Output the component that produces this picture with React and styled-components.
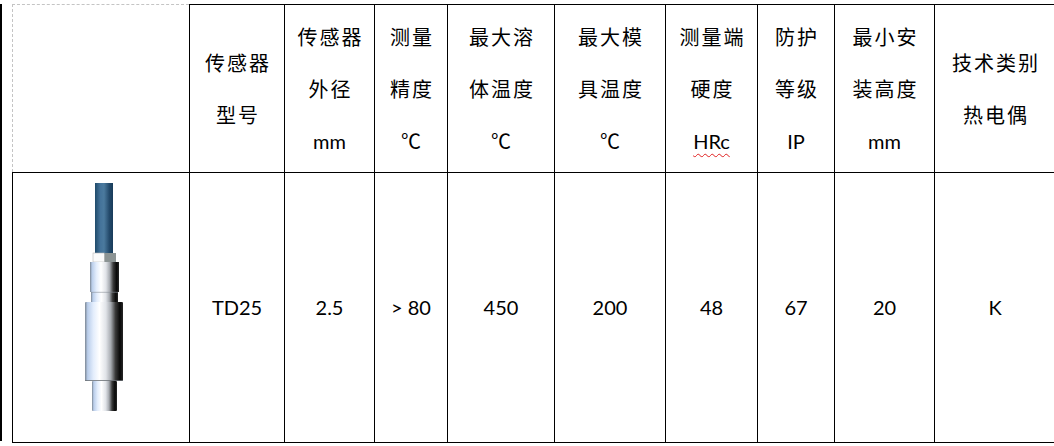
import React from 'react';
import styled, { createGlobalStyle } from 'styled-components';

const GlobalStyle = createGlobalStyle`
  html, body {
    margin: 0;
    padding: 0;
    background: #fff;
    overflow: hidden;
  }
  body {
    font-family: 'Noto Sans CJK SC', sans-serif;
    font-weight: 400;
    color: #000;
  }
`;

const Page = styled.div`
  display: flex;
  align-items: flex-start;
  gap: 10px;
  padding-top: 4px;
  width: 1100px;
`;

const EdgeRule = styled.div`
  width: 2px;
  height: 437px;
  background: #000;
  flex: none;
`;

const Table = styled.table`
  border-collapse: collapse;
  table-layout: fixed;
  width: 1043px;
  flex: none;
`;

const HeadRow = styled.tr`
  height: 168px;
`;

const DataRow = styled.tr`
  height: 270px;
`;

const Cell = styled.td`
  padding: 0;
  border: 1px solid #000;
  text-align: center;
  vertical-align: middle;
`;

const BlankCell = styled(Cell)`
  border-top: 1px dashed #c4c4c4;
  border-left: 1px dashed #c4c4c4;
`;

const ImageCell = styled(Cell)`
  padding: 0 0 16px 5px;
`;

const Line = styled.span`
  display: block;
  height: 52px;
  line-height: 52px;
  white-space: nowrap;
  font-family: ${(p) =>
    p.latin ? "Lato, 'Liberation Sans', sans-serif" : "'Noto Sans CJK SC', sans-serif"};
  font-size: 20px;
  font-weight: 400;
  letter-spacing: ${(p) => (p.latin ? '0' : '2px')};
  text-indent: ${(p) => (p.latin ? '0' : '2px')};
  text-decoration: ${(p) => (p.typo ? 'underline wavy #e02020' : 'none')};
  text-decoration-thickness: 1px;
  text-underline-offset: 4px;
`;

const Value = styled.span`
  font-family: Lato, 'Liberation Sans', sans-serif;
  font-size: 20px;
  font-weight: 400;
`;

const columns = [177, 95, 90, 73, 107, 111, 92, 77, 100, 121];

const headers = [
  [{ t: '传感器' }, { t: '型号' }],
  [{ t: '传感器' }, { t: '外径' }, { t: 'mm', latin: true }],
  [{ t: '测量' }, { t: '精度' }, { t: '℃' }],
  [{ t: '最大溶' }, { t: '体温度' }, { t: '℃' }],
  [{ t: '最大模' }, { t: '具温度' }, { t: '℃' }],
  [{ t: '测量端' }, { t: '硬度' }, { t: 'HRc', latin: true, typo: true }],
  [{ t: '防护' }, { t: '等级' }, { t: 'IP', latin: true }],
  [{ t: '最小安' }, { t: '装高度' }, { t: 'mm', latin: true }],
  [{ t: '技术类别' }, { t: '热电偶' }],
];

const values = ['TD25', '2.5', '> 80', '450', '200', '48', '67', '20', 'K'];

const Sensor = () => (
  <svg width="40" height="230" viewBox="0 0 40 230">
    <defs>
      <linearGradient id="metal" x1="0" x2="1" y1="0" y2="0">
        <stop offset="0" stopColor="#7c8794" />
        <stop offset="0.07" stopColor="#b9cdea" />
        <stop offset="0.22" stopColor="#e3edfc" />
        <stop offset="0.38" stopColor="#ffffff" />
        <stop offset="0.55" stopColor="#e0e3e8" />
        <stop offset="0.68" stopColor="#a6aab0" />
        <stop offset="0.8" stopColor="#3a3a3a" />
        <stop offset="0.92" stopColor="#080808" />
        <stop offset="1" stopColor="#262626" />
      </linearGradient>
      <linearGradient id="cable" x1="0" x2="1" y1="0" y2="0">
        <stop offset="0" stopColor="#1f4a6a" />
        <stop offset="0.3" stopColor="#44739a" />
        <stop offset="0.5" stopColor="#4b7a9e" />
        <stop offset="0.8" stopColor="#23496a" />
        <stop offset="1" stopColor="#183c5a" />
      </linearGradient>
    </defs>
    <rect x="11" y="1" width="18" height="71" fill="url(#cable)" />
    <rect x="9" y="71" width="11.5" height="9" fill="#fbfbfb" stroke="#b8b8b8" strokeWidth="0.6" />
    <rect x="20.5" y="71" width="11.5" height="9" fill="#8c9494" />
    <rect x="6" y="80" width="29" height="30" fill="url(#metal)" />
    <rect x="7" y="110" width="27" height="10" fill="url(#metal)" />
    <line x1="7" y1="110.3" x2="34" y2="110.3" stroke="#8a9098" strokeWidth="0.6" />
    <rect x="1" y="120" width="38" height="79" rx="1" fill="url(#metal)" />
    <line x1="1" y1="198.5" x2="39" y2="198.5" stroke="#6a6e74" strokeWidth="0.8" />
    <rect x="8" y="199" width="25" height="30" rx="1" fill="url(#metal)" />
  </svg>
);

export default function App() {
  return (
    <>
      <GlobalStyle />
      <Page>
        <EdgeRule />
        <Table>
          <colgroup>
            {columns.map((w, i) => (
              <col key={i} style={{ width: w }} />
            ))}
          </colgroup>
          <tbody>
            <HeadRow>
              <BlankCell />
              {headers.map((lines, i) => (
                <Cell key={i}>
                  {lines.map((l, j) => (
                    <Line key={j} latin={l.latin} typo={l.typo}>
                      {l.t}
                    </Line>
                  ))}
                </Cell>
              ))}
            </HeadRow>
            <DataRow>
              <ImageCell>
                <Sensor />
              </ImageCell>
              {values.map((v, i) => (
                <Cell key={i}>
                  <Value>{v}</Value>
                </Cell>
              ))}
            </DataRow>
          </tbody>
        </Table>
      </Page>
    </>
  );
}
